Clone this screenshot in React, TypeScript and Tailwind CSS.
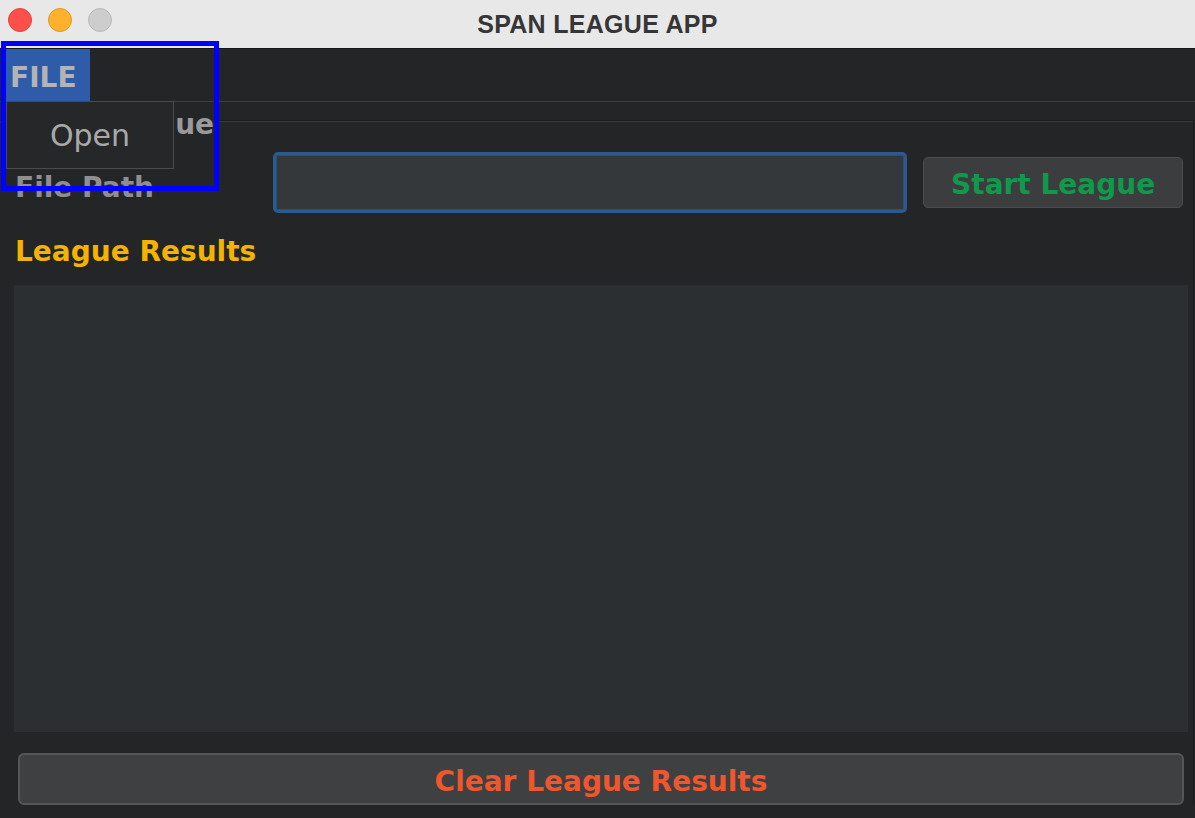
import React from "react";

export default function App() {
  const font = { fontFamily: '"DejaVu Sans", "Liberation Sans", sans-serif' };
  return (
    <div
      className="relative w-[1195px] h-[818px] overflow-hidden bg-[#242527] flex flex-col"
      style={font}
    >
      {/* Title bar */}
      <div className="relative h-[49px] shrink-0 bg-[#e8e8e8] border-b border-[#161616] flex items-center">
        <div className="absolute left-[8px] top-[8px] flex gap-[16px]">
          <div className="w-[24px] h-[24px] rounded-full bg-[#fe4f49] border border-[#e0443e]" />
          <div className="w-[24px] h-[24px] rounded-full bg-[#fdb12c] border border-[#e09b22]" />
          <div className="w-[24px] h-[24px] rounded-full bg-[#cdcdcd] border border-[#b8b8b8]" />
        </div>
        <div
          className="w-full text-center text-[25px] font-bold text-[#363636] tracking-[0.3px] pt-[1px]"
          style={{ fontFamily: '"Liberation Sans", Arial, sans-serif' }}
        >
          SPAN LEAGUE APP
        </div>
      </div>

      {/* Menu bar */}
      <div className="h-[53px] shrink-0 bg-[#242527] border-b border-[#3c3d3f] flex items-stretch pl-[6px]">
        <div className="w-[84px] bg-[#2f5ca8] flex items-center pl-[4px] pt-[5px] text-[28px] font-bold text-[#b4b4b4] leading-none">
          FILE
        </div>
      </div>

      {/* Content */}
      <div className="flex-1 flex flex-col">
        {/* Titled panel */}
        <div className="relative mt-[18px] mr-[1px] border-t border-r border-[#1b1c1d] flex flex-col">
          <div className="border-t border-[#38393b]" />
          <div className="absolute left-[10px] top-[-12px] bg-[#242527] pr-[3px] text-[28px] font-bold text-[#9a9a9a] leading-[32px]">
            Start League
          </div>
          <div className="flex items-center mt-[30px] pl-[15px] pr-[10px]">
            <div className="w-[258px] text-[28px] font-bold text-[#8f8f8f] leading-[32px] pt-[10px]">
              File Path
            </div>
            <div className="w-[635px] h-[61px] rounded-[5px] border-[3px] border-[#2a5a8f] bg-[#2b4f7a] p-[1px]">
              <div className="w-full h-full bg-[#35383b]" />
            </div>
            <div className="ml-[16px] w-[260px] h-[51px] rounded-[5px] border border-[#4b4c4e] bg-[#3c3d3f] flex items-center justify-center pt-[5px] text-[28px] font-bold text-[#10994a] leading-none">
              Start League
            </div>
          </div>
          <div className="mt-[22px] pl-[15px] text-[28px] font-bold text-[#f3b300] leading-[34px]">
            League Results
          </div>
          <div className="mt-[16px] ml-[14px] mr-[5px] h-[447px] bg-[#2c2f31]" />
          <div className="mt-[21px] ml-[18px] mr-[9px] h-[52px] rounded-[6px] border-[2px] border-[#555658] bg-[#3f4042] flex items-center justify-center pt-[5px] text-[28px] font-bold text-[#f0562c] leading-none">
            Clear League Results
          </div>
        </div>
      </div>

      {/* Popup menu */}
      <div className="absolute left-[6px] top-[101px] w-[168px] h-[68px] bg-[#262729] border border-[#4a4b4d] flex items-center justify-center text-[30px] text-[#a9a9a9]">
        Open
      </div>

      {/* Annotation rectangle */}
      <div className="absolute left-[1px] top-[41px] w-[218px] h-[150px] border-[5px] border-[#0000ff]" />
    </div>
  );
}
